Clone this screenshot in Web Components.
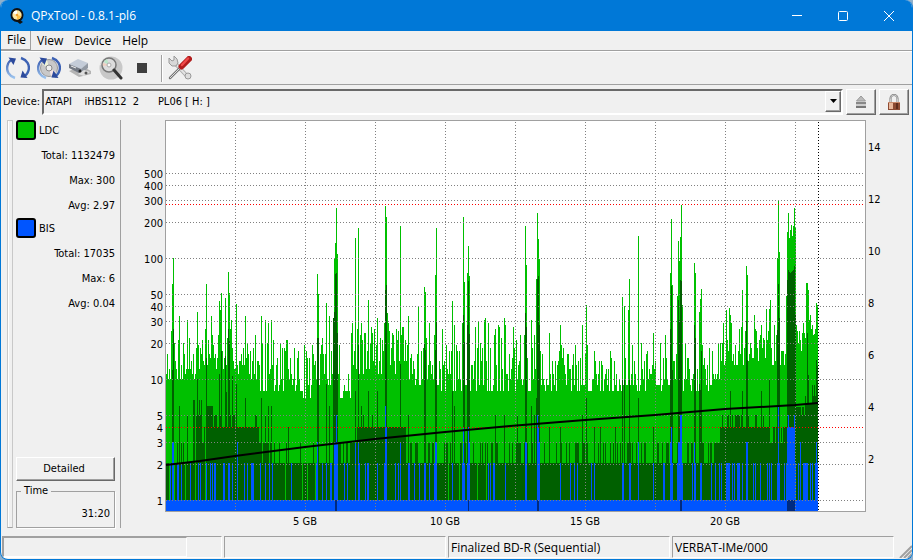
<!DOCTYPE html>
<html lang="en">
    <head>
        <meta charset="UTF-8" />
        <title>QPxTool - 0.8.1-pl6</title>
        <style>
            html,
            body {
                margin: 0;
                height: 100%;
                background: #8fb0cc;
            }
            body {
                font: 11px/14px "DejaVu Sans Condensed", "Liberation Sans", sans-serif;
                color: #000;
                overflow: hidden;
            }
        </style>
    </head>

    <body>
        <qpx-window>
            <qpx-titlebar slot="title">QPxTool - 0.8.1-pl6</qpx-titlebar>
            <qpx-menubar slot="bars"></qpx-menubar>
            <qpx-toolbar slot="bars"></qpx-toolbar>
            <qpx-device slot="bars"></qpx-device>
            <qpx-sidebar slot="side">
                <qpx-errors name="LDC" color="#00c000" total="1132479" max="300" avg="2.97"></qpx-errors>
                <qpx-errors name="BIS" color="#0055ff" total="17035" max="6" avg="0.04"></qpx-errors>
            </qpx-sidebar>
            <qpx-graph slot="graph"></qpx-graph>
            <qpx-statusbar slot="status">
                <span slot="media">Finalized BD-R (Sequential)</span>
                <span slot="id">VERBAT-IMe/000</span>
            </qpx-statusbar>
        </qpx-window>

        <script>
            class Base extends HTMLElement {
                connectedCallback() {
                    if (this.shadowRoot) return;
                    const root = this.attachShadow({ mode: "open" });
                    root.innerHTML = `<style>* { box-sizing: border-box; } :host { display: block; box-sizing: border-box; } ${this.css()}</style>${this.html()}`;
                    this.ready();
                }
                css() {
                    return "";
                }
                html() {
                    return "<slot></slot>";
                }
                ready() {}
            }

            class QpxWindow extends Base {
                css() {
                    return `
            :host {
              height: 100vh;
              display: flex;
              flex-direction: column;
              background: #f0f0f0;
              border: 1px solid #0078d7;
              border-top: 0;
              border-radius: 8px;
              overflow: hidden;
            }
            main {
              flex: 1;
              min-height: 0;
              display: flex;
              padding: 4px 0 0 6px;
            }
            slot[name=side]::slotted(*) { flex: none; }
            slot[name=graph]::slotted(*) { flex: 1; min-width: 0; }
          `;
                }
                html() {
                    return `
            <slot name="title"></slot>
            <slot name="bars"></slot>
            <main><slot name="side"></slot><slot name="graph"></slot></main>
            <slot name="status"></slot>`;
                }
            }

            class QpxTitlebar extends Base {
                css() {
                    return `
            :host {
              height: 31px;
              display: flex;
              align-items: center;
              background: #0078d7;
              color: #fff;
              padding-left: 8px;
              font: 12px/16px "Open Sans", sans-serif;
            }
            .name { flex: 1; padding-left: 6px; }
            button {
              width: 46px;
              height: 31px;
              padding: 0;
              border: 0;
              background: none;
              display: grid;
              place-items: center;
            }
            svg { display: block; }
            button path { fill: none; stroke: #fff; }
          `;
                }
                html() {
                    return `
            <svg width="16" height="16" viewBox="0 0 16 16">
              <ellipse cx="8" cy="7" rx="6.500" ry="7" fill="#111"/>
              <path d="M8 10l6 4-3 2-5-4z" fill="#111"/>
              <circle cx="8" cy="7" r="4.700" fill="#ffe6a0"/>
              <path d="M8 7L4 5a4.400 4.400 0 0 1 4-2.400z" fill="#fff"/>
              <path d="M8 7l4.300 1A4.400 4.400 0 0 1 8 11.400z" fill="#ffc247"/>
              <circle cx="8" cy="7" r="1.300" fill="#f5a030"/>
            </svg>
            <span class="name"><slot></slot></span>
            <button aria-label="Minimize"><svg width="12" height="12"><path d="M1 5.500h10"/></svg></button>
            <button aria-label="Maximize"><svg width="12" height="12"><rect x="1.500" y="1.500" width="9" height="9" rx="1" fill="none" stroke="#fff"/></svg></button>
            <button aria-label="Close"><svg width="12" height="12"><path d="M1 1l10 10M11 1L1 11"/></svg></button>`;
                }
            }

            class QpxMenubar extends Base {
                css() {
                    return `
            :host {
              display: flex;
              height: 21px;
              border-bottom: 1px solid #fff;
              box-shadow: inset 0 -1px #a0a0a0;
            }
            button {
              height: 19px;
              padding: 0 5px 0 6px;
              border: 0;
              background: none;
              font: 12px/18px "Open Sans", sans-serif;
              color: #000;
            }
            button:first-of-type {
              padding-right: 4px;
              border-right: 1px solid #a0a0a0;
              border-bottom: 1px solid #a0a0a0;
            }
          `;
                }
                html() {
                    return ["File", "View", "Device", "Help"].map((t) => `<button>${t}</button>`).join("");
                }
            }

            const ARROWS = `
            <path d="M9 22C3 20 0 15 1.500 9.500C2.300 6.500 4 4.500 6 3.500" fill="none" stroke="url(#fade)" stroke-width="2.400"/>
            <path d="M15 2C21 4 24 9 22.500 14.500C21.700 17.500 20 19.500 18 20.500" fill="none" stroke="#3d62b4" stroke-width="2.400"/>
            <path d="M2.500 1.500l7.500 1-2.500 6.500z" fill="#2c4a9c"/>
            <path d="M21.500 22l-7-.5 2-7z" fill="#2c4a9c"/>`;
            const FADE = `<defs><linearGradient id="fade" x2="0" y2="1"><stop offset="0" stop-color="#3a5cb0"/><stop offset="1" stop-color="#9cc4ee"/></linearGradient></defs>`;

            class QpxToolbar extends Base {
                css() {
                    return `
            :host {
              display: flex;
              align-items: center;
              height: 33px;
              padding-left: 1px;
              border-bottom: 1px solid #a0a0a0;
            }
            button {
              width: 31px;
              height: 30px;
              padding: 0;
              border: 0;
              background: none;
              display: grid;
              place-items: center;
            }
            hr { width: 2px; height: 27px; margin: 0 1px 0 4px; border: 0; border-left: 1px solid #a0a0a0; border-right: 1px solid #fff; }
          `;
                }
                html() {
                    const icon = (label, body) =>
                        `<button aria-label="${label}"><svg width="24" height="24" viewBox="0 0 24 24">${body}</svg></button>`;
                    return (
                        icon("Rescan bus", FADE + ARROWS) +
                        icon("Update media info", `${FADE}
              <circle cx="12" cy="12" r="8.500" fill="#c9c9c9" stroke="#999"/>
              <path d="M12 12L5 8a8 8 0 0 1 5-4z" fill="#eef3d8"/>
              <path d="M12 12l7 4a8 8 0 0 1-5 4z" fill="#f4e4e4"/>
              <circle cx="12" cy="12" r="3" fill="#eee" stroke="#888"/>${ARROWS}`) +
                        icon("Device info", `
              <path d="M1 15l10 6 12-3v-3l-9-5z" fill="#b4b4b4"/>
              <path d="M1 8l9-5 10 4-7 7z" fill="#c4ccd8"/>
              <path d="M1 8l12 5v5L1 12z" fill="#737983"/>
              <path d="M13 13l7-6v5l-7 6z" fill="#9299a3"/>
              <path d="M10 18l6-4 6 2-6 4z" fill="#dedede"/>
              <circle cx="12" cy="15" r="1.500" fill="#222"/><circle cx="18" cy="17" r="1.500" fill="#555"/>
              <path d="M3 10l5 2" stroke="#eee"/>`) +
                        icon("Scan", `
              <circle cx="12" cy="12" r="11.500" fill="#c8c8c8"/>
              <path d="M12 12L1 9a11 11 0 0 1 7-8z" fill="#e6e6e6"/>
              <circle cx="10" cy="9" r="7" fill="#dcdcdc" stroke="#777" stroke-width="1.500"/>
              <path d="M10 9L5 6a6 6 0 0 1 3-3z" fill="#b9e6c8"/>
              <path d="M10 9l-6 1a6 6 0 0 1 0-3z" fill="#f2cfc0"/>
              <circle cx="10" cy="9" r="2" fill="#fafafa" stroke="#aaa"/>
              <path d="M15 14l7 8" stroke="#333" stroke-width="3" stroke-linecap="round"/>`) +
                        icon("Stop", `<path d="M7 7h10v10H7z" fill="#3f3f3f"/>`) +
                        "<hr>" +
                        icon("Preferences", `
              <path d="M5 5l14 15" stroke="#aaa" stroke-width="4"/>
              <path d="M5 5l14 15" stroke="#e4e4e4" stroke-width="2"/>
              <path d="M1 2v5l3 3h4l2-3-1-4-3-3v4L4 5z" fill="#d8d8d8" stroke="#999"/>
              <circle cx="20" cy="20" r="3" fill="#ddd" stroke="#999"/>
              <path d="M2 22L13 11" stroke="#777" stroke-width="2.500" stroke-linecap="round"/>
              <path d="M2 22L13 11" stroke="#ddd"/>
              <path d="M13.500 10.500l7.500-7.500" stroke="#b01c1c" stroke-width="6" stroke-linecap="round"/>
              <path d="M14 9l6-6.500" stroke="#f04848" stroke-width="2.500" stroke-linecap="round"/>`)
                    );
                }
            }

            class QpxDevice extends Base {
                css() {
                    return `
            :host {
              display: flex;
              align-items: center;
              height: 31px;
              padding: 2px 3px 0 2px;
            }
            .combo { position: relative; flex: 1; display: flex; margin-left: 2px; }
            select {
              flex: 1;
              min-width: 0;
              height: 26px;
              appearance: none;
              font: inherit;
              color: #000;
              padding: 1px 24px 0 1px;
              border-radius: 0;
              background: #f0f0f0;
              border: 2px solid;
              border-color: #696969 #fff #fff #696969;
            }
            .drop {
              position: absolute;
              right: 2px;
              top: 2px;
              width: 16px;
              height: 21px;
              pointer-events: none;
              display: grid;
              place-items: center;
              background: #f0f0f0;
              border: 1px solid;
              border-color: #fff #696969 #696969 #fff;
              box-shadow: inset -1px -1px #a0a0a0;
            }
            button {
              width: 30px;
              height: 26px;
              margin-left: 3px;
              padding: 0;
              background: #f0f0f0;
              border: 1px solid;
              border-color: #fff #696969 #696969 #fff;
              box-shadow: inset -1px -1px #a0a0a0;
              display: grid;
              place-items: center;
            }
            svg { display: block; }
          `;
                }
                html() {
                    const name = "ATAPI    iHBS112  2      PL06 [ H: ]".replace(/ /g, "&nbsp;");
                    return `
            <label for="dev">Device:</label>
            <div class="combo">
              <select id="dev"><option>${name}</option></select>
              <span class="drop"><svg width="7" height="4"><path d="M0 0h7L3.500 4z"/></svg></span>
            </div>
            <button aria-label="Eject"><svg width="12" height="13">
              <path d="M6 1l4.500 5h-9z" fill="#bbb" stroke="#999"/>
              <path d="M1 7h10v2H1z" fill="#888"/><path d="M1 9h10v2H1z" fill="#ccc"/><path d="M1 11h10v2H1z" fill="#777"/>
            </svg></button>
            <button aria-label="Lock"><svg width="12" height="16">
              <path d="M2.500 9V4.500a3.500 3.500 0 0 1 7 0V9" fill="none" stroke="#777" stroke-width="2"/>
              <path d="M2.500 9V4.500a3.500 3.500 0 0 1 7 0V9" fill="none" stroke="#ccc"/>
              <path d="M0 8h12v8H0z" fill="#8c4a32"/><path d="M1 9h4v6H1z" fill="#e8b89c"/><path d="M0 8h12v1H0z" fill="#c98a6c"/><path d="M8 9h2v6H8z" fill="#5e2c1c"/>
            </svg></button>`;
                }
            }

            class QpxSidebar extends Base {
                css() {
                    return `
            :host { display: flex; padding-bottom: 8px; }
            .handle { width: 6px; border: 1px solid #c8c8c8; border-bottom-color: #a0a0a0; box-shadow: inset 1px 0 #fff; }
            .col {
              width: 108px;
              display: flex;
              flex-direction: column;
              padding: 0 5px 0 3px;
              border-right: 1px solid #a0a0a0;
            }
            .space { flex: 1; }
            button {
              height: 24px;
              margin-bottom: 3px;
              font: inherit;
              color: #000;
              background: #f0f0f0;
              border: 1px solid;
              border-color: #fff #696969 #696969 #fff;
              box-shadow: inset -1px -1px #a0a0a0;
              padding: 0 3px 0 0;
            }
            fieldset {
              height: 44px;
              margin: 0;
              min-width: 0;
              padding: 9px 4px 0 0;
              border: 1px solid #a0a0a0;
              box-shadow: 1px 1px #fff;
              text-align: right;
            }
            legend { padding: 0 3px; margin-left: 4px; text-align: left; line-height: 14px; }
          `;
                }
                html() {
                    return `
            <div class="handle"></div>
            <div class="col">
              <slot></slot>
              <div class="space"></div>
              <button>Detailed</button>
              <fieldset><legend>Time</legend>31:20</fieldset>
            </div>`;
                }
            }

            class QpxErrors extends Base {
                css() {
                    return `
            .head { display: flex; align-items: center; height: 20px; gap: 3px; line-height: 16px; }
            .head span:last-child { padding-top: 2px; }
            .box { width: 20px; height: 20px; border: 2px solid #000; border-radius: 3px; background: ${this.getAttribute("color")}; }
            p { margin: 0; height: 25px; text-align: right; line-height: 31px; }
            p:last-child { height: 28px; }
          `;
                }
                html() {
                    const a = (n) => this.getAttribute(n);
                    return `
            <div class="head"><span class="box"></span><span>${a("name")}</span></div>
            <p>Total: ${a("total")}</p><p>Max: ${a("max")}</p><p>Avg: ${a("avg")}</p>`;
                }
            }

            // Samples are stored as "column top" pairs in trace units.
            // The plot area starts at column 166, row 121 and is 699 x 390 units.
            const X0 = 166, Y0 = 121, COLS = 699, ROWS = 390, END = 818;

            const LDC_PEAKS = `172 284 173 258 179 316 187 320 197 312 206 284 211 316 219 301 220 310 221 293 225 298 228 272
              229 293 231 320 236 304 245 316 261 316 265 320 268 323 271 320 317 274 318 294 326 303 329 316 333 318 334 258
              335 243 336 208 337 254 351 333 352 323 355 238 358 228 361 323 364 333 368 300 372 333 374 329 377 318 380 338
              384 323 385 206 386 217 387 313 393 335 400 226 408 316 418 307 424 287 425 292 426 338 429 323 434 335 435 275
              436 228 442 329 452 301 454 325 462 323 463 217 464 282 467 273 468 246 469 276 475 327 478 321 484 320 485 318
              488 323 494 335 495 329 498 325 499 327 504 318 505 325 513 327 520 335 524 335 525 226 526 265 531 320 534 335
              536 279 537 213 538 239 539 259 549 333 560 325 582 325 586 305 622 297 624 306 628 310 629 279 638 236 653 333
              665 335 670 273 671 219 672 285 677 296 678 241 679 261 680 237 681 205 682 305 694 263 695 273 699 312 700 299
              701 289 723 323 726 310 729 308 730 315 731 323 741 327 742 290 746 266 747 275 754 315 761 325 766 309 769 309
              770 300 774 325 777 258 778 201 779 252 786 296 787 232 788 213 789 238 790 230 791 225 792 236 793 226 794 208
              795 227 796 325 799 331 802 333 803 323 804 333 805 338 806 283 807 283 808 290 809 320 810 315 811 329 812 325
              813 335 814 334 815 329 816 303 817 305`;
            const LDC_AVG = `172 370 173 329 177 443 179 406 181 443 187 416 197 379 206 358 219 374 221 351 225 356 226 392
              228 329 229 341 232 376 236 384 245 398 255 415 256 415 261 398 265 416 268 406 271 406 288 427 317 338 318 338
              326 384 329 406 333 318 334 312 335 274 336 273 337 333 355 391 358 345 361 406 363 415 368 391 372 415 377 391
              385 290 386 285 400 364 408 415 424 343 425 350 435 350 436 322 452 391 454 406 463 315 464 342 467 325 468 281
              469 334 495 415 504 415 517 415 525 313 526 327 531 406 534 415 536 398 537 279 538 276 539 325 549 427 560 427
              582 415 586 398 594 427 600 427 615 427 622 380 624 380 629 380 638 398 653 427 670 329 671 286 672 370 678 300
              679 320 680 280 681 281 694 325 695 338 699 384 700 390 701 351 730 391 742 391 746 321 747 360 761 391 769 380
              777 330 778 284 779 318 787 280 788 270 789 272 790 273 791 272 792 271 793 270 794 266 795 315 807 333 808 375
              816 360 817 366`;
            const BIS_PEAKS = `170 463 172 442 173 442 177 463 178 463 181 463 190 463 198 463 200 463 206 463 210 463 212 463
              214 463 215 463 223 463 224 463 228 463 229 463 232 463 237 442 244 463 247 463 251 463 252 463 253 463 260 463
              265 463 269 463 272 463 291 463 316 463 317 442 322 463 326 463 330 463 331 463 334 442 335 442 336 415 337 442
              344 463 347 463 355 442 358 442 359 463 365 463 367 463 368 463 377 463 384 463 385 406 386 427 395 463 398 463
              400 442 408 463 409 463 414 463 419 463 424 463 425 463 429 463 434 463 435 442 436 442 452 463 462 463 463 427
              464 463 467 463 468 427 469 442 488 463 490 463 493 463 494 463 505 463 525 442 526 442 537 415 538 427 539 442
              560 463 570 463 574 463 577 463 591 463 594 463 622 463 623 463 629 463 630 463 638 442 653 463 663 463 664 463
              670 442 671 427 672 463 677 463 678 442 679 442 680 415 681 415 682 463 692 463 694 442 695 463 700 463 701 463
              711 463 715 463 719 463 721 463 726 463 727 463 728 463 729 463 732 463 734 463 737 463 738 463 739 463 742 463
              746 442 747 442 753 463 755 463 760 463 767 463 769 463 771 463 777 463 778 406 779 463 784 463 786 463 787 427
              788 415 789 427 790 427 791 427 792 427 793 427 794 415 795 463 798 463 800 442 803 463 804 463 805 463 806 463
              807 463 810 463 812 463 815 463 816 442 817 463`;
            const NO_AVG = [169, 174, 185, 190, 195, 205, 285, 291, 302, 307, 315, 448, 454, 459, 477, 486];
            const BIS_AVG = [335, 336, 468, 537, 538, 680, 681, 787, 788, 789, 790, 791, 792, 793, 794];
            // from column, lowest count, highest count
            const LDC_FLOOR = [[166, 10, 26], [200, 12, 27], [236, 10, 24], [260, 8, 22], [296, 7, 20], [312, 9, 23], [340, 7, 12],
                [351, 11, 29], [406, 9, 22], [440, 8, 19], [478, 8, 22], [518, 8, 19], [560, 8, 20], [600, 8, 20], [672, 8, 20],
                [712, 10, 22], [725, 13, 27], [796, 17, 30], [802, 24, 33]];
            // from column, usual row, other row, share of the other row
            const AVG_FLOOR = [[166, 463, 443, 0.15], [193, 415, 400, 0.6], [202, 443, 427, 0.3], [206, 406, 406, 0], [213, 427, 415, 0.4],
                [237, 427, 427, 0], [259, 443, 463, 0.3], [272, 463, 443, 0.12], [337, 443, 443, 0], [341, 463, 443, 0.2],
                [350, 443, 427, 0.2], [358, 427, 427, 0], [406, 443, 463, 0.5], [414, 463, 443, 0.25], [714, 443, 443, 0],
                [718, 443, 427, 0.5], [722, 427, 415, 0.4], [767, 443, 427, 0.6], [787, 427, 427, 0], [796, 407, 415, 0.1],
                [805, 403, 396, 0.4], [812, 396, 385, 0.5]];
            const SPEED = [[166, 465], [200, 461], [235, 456], [305, 447], [375, 439], [445, 432], [510, 426], [585, 420], [655, 415], [725, 409], [795, 405], [818, 403]];
            const COUNTS = [500, 400, 300, 200, 100, 50, 40, 30, 20, 10, 5, 4, 3, 2, 1];

            const countRow = (n) => Math.round(500 - 121 * Math.log10(n));

            function random(seed) {
                return () => {
                    seed = (seed * 1664525 + 1013904223) >>> 0;
                    return seed / 4294967296;
                };
            }

            function pairs(text) {
                const nums = text.trim().split(/\s+/).map(Number);
                const map = new Map();
                for (let i = 0; i < nums.length; i += 2) map.set(nums[i], nums[i + 1]);
                return map;
            }

            class QpxGraph extends Base {
                css() {
                    return `
            :host { min-height: 0; overflow: hidden; }
            svg { display: block; width: 100%; height: 100%; }
            text { font: inherit; fill: #000; }
            .grid { stroke: #808080; stroke-dasharray: 1 2; }
            .limit { stroke: #ff0000; stroke-dasharray: 1 2; }
            .end { stroke: #000; stroke-dasharray: 1 2; }
          `;
                }
                html() {
                    return `<svg role="img" aria-label="LDC and BIS error graph"></svg>`;
                }
                ready() {
                    this.series = this._series();
                    this._draw();
                    new ResizeObserver(() => this._draw()).observe(this);
                }

                _series() {
                    const rnd = random(7);
                    const ldc = pairs(LDC_PEAKS);
                    const avg = pairs(LDC_AVG);
                    const pick = (list, x) => list.filter((r) => r[0] <= x).pop();
                    for (let x = X0; x < END; x++) {
                        const [, lo, hi] = pick(LDC_FLOOR, x);
                        const n = Math.round(lo + (hi - lo) * Math.pow(rnd(), 2));
                        if (!ldc.has(x)) ldc.set(x, countRow(n));
                        const [, low, high, chance] = pick(AVG_FLOOR, x);
                        const top = rnd() < chance ? high : low;
                        if (!avg.has(x)) avg.set(x, NO_AVG.includes(x) ? 500 : top);
                    }
                    return { ldc, avg, bis: pairs(BIS_PEAKS) };
                }

                _draw() {
                    const w = this.clientWidth;
                    const h = this.clientHeight;
                    if (!w || !h) return;
                    const left = 45, top = 1, right = 47, bottom = 25;
                    const pw = w - left - right;
                    const ph = h - top - bottom;
                    const px = (x) => left + Math.round(((x - X0) * pw) / COLS);
                    const py = (y) => top + Math.round(((y - Y0) * ph) / ROWS);
                    const base = top + ph;
                    const bars = (map, color) => {
                        let d = "";
                        map.forEach((y, x) => {
                            d += `M${px(x)} ${base}V${py(y)}H${px(x + 1)}V${base}z`;
                        });
                        return `<path d="${d}" fill="${color}"/>`;
                    };
                    const hline = (y, cls) => `<path class="${cls}" d="M${left} ${py(y) + 0.5}H${left + pw}"/>`;
                    const vline = (x, cls) => `<path class="${cls}" d="M${px(x) + 0.5} ${top + 1}V${base}"/>`;

                    let out = `<rect x="${left - 0.5}" y="${top - 0.5}" width="${pw + 1}" height="${ph + 1}" fill="#fff" stroke="#a0a0a0"/>`;
                    out += '<g shape-rendering="crispEdges">';
                    out += bars(this.series.ldc, "#00c000");
                    out += bars(this.series.avg, "#006000");
                    out += `<path d="M${left} ${base}V${py(500)}H${px(END)}V${base}z" fill="#0055ff"/>`;
                    out += bars(this.series.bis, "#0055ff");
                    out += bars(new Map(BIS_AVG.map((x) => [x, 500])), "#002a80");
                    for (let x = 235; x < 865; x += 70) out += vline(x, "grid");
                    COUNTS.forEach((n) => (out += hline(countRow(n), n === 4 ? "limit" : "grid")));
                    out += hline(204, "limit") + vline(END, "end") + "</g>";
                    out += `<polyline points="${SPEED.map((p) => `${px(p[0])},${py(p[1])}`).join(" ")}" fill="none" stroke="#000" stroke-width="2"/>`;
                    COUNTS.forEach((n) => {
                        out += `<text x="${left - 3}" y="${py(countRow(n)) + 5}" text-anchor="end">${n}</text>`;
                    });
                    for (let s = 2; s <= 14; s += 2) {
                        out += `<text x="${left + pw + 3}" y="${py(511 - s * 26) + 4}">${s}</text>`;
                    }
                    for (let g = 5; g <= 20; g += 5) {
                        out += `<text x="${px(165 + g * 28)}" y="${base + 14}" text-anchor="middle">${g} GB</text>`;
                    }
                    this.shadowRoot.querySelector("svg").innerHTML = out;
                }
            }

            class QpxStatusbar extends Base {
                css() {
                    return `
            :host { display: flex; height: 23px; padding: 0 0 1px 1px; }
            div {
              flex: 1;
              margin-right: 2px;
              padding: 3px 0 0 2px;
              border: 1px solid;
              border-color: #a0a0a0 #fff #fff #a0a0a0;
              font: 12px/16px "Open Sans", sans-serif;
              white-space: nowrap;
            }
            .first { padding: 0; }
            .progress { display: block; height: 20px; width: 184px; border: 1px solid; border-color: #a0a0a0 #fff #fff #a0a0a0; }
            svg { flex: none; align-self: flex-end; width: 16px; height: 16px; }
          `;
                }
                html() {
                    return `
            <div class="first"><span class="progress"></span></div>
            <div></div>
            <div><slot name="media"></slot></div>
            <div><slot name="id"></slot></div>
            <svg><path d="M4 16L16 4M8 16l8-8M12 16l4-4" stroke="#a0a0a0" stroke-width="2"/></svg>`;
                }
            }

            customElements.define("qpx-window", QpxWindow);
            customElements.define("qpx-titlebar", QpxTitlebar);
            customElements.define("qpx-menubar", QpxMenubar);
            customElements.define("qpx-toolbar", QpxToolbar);
            customElements.define("qpx-device", QpxDevice);
            customElements.define("qpx-sidebar", QpxSidebar);
            customElements.define("qpx-errors", QpxErrors);
            customElements.define("qpx-graph", QpxGraph);
            customElements.define("qpx-statusbar", QpxStatusbar);
        </script>
    </body>
</html>
